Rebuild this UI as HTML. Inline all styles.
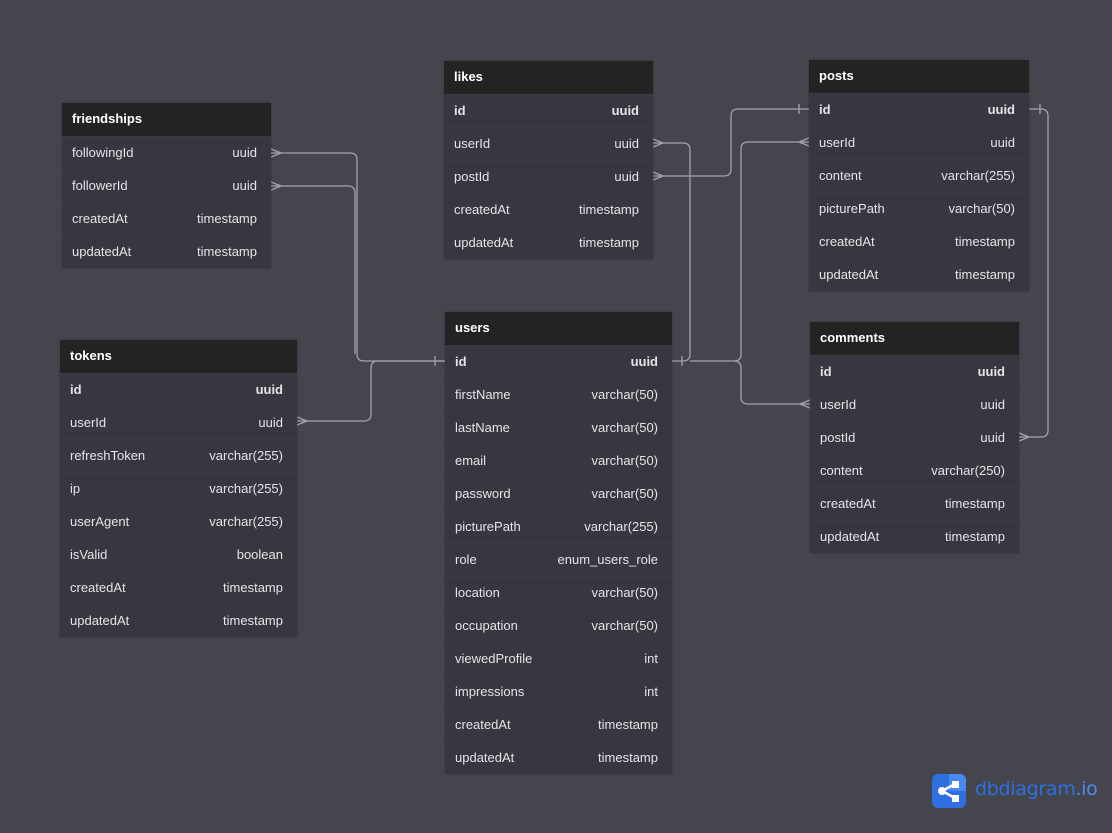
<!DOCTYPE html>
<html><head><style>
body{margin:0;width:1112px;height:833px;background:#45454e;font-family:"Liberation Sans",sans-serif;overflow:hidden;position:relative}
.t{position:absolute;background:#37373f;box-shadow:0 0 2px rgba(0,0,0,.3)}
.h{height:33px;background:#232323;color:#fff;font-weight:bold;font-size:13px;line-height:31px;padding-left:10px}
.r{height:33px;line-height:31px;font-size:13px;color:#e4e4e8;padding:0 14px 0 10px;display:flex;justify-content:space-between;border-top:1px solid #3c3c44;box-sizing:border-box}
.r.b{font-weight:bold}
svg{position:absolute;left:0;top:0}
</style></head><body>
<svg width="1112" height="833" fill="none" stroke="#a3a3ad" stroke-width="1.3">
<path d="M271 153H350q7 0 7 7V354q0 7 7 7H445"/>
<path d="M271 186H348q7 0 7 7V354"/>
<path d="M297 421H364q7 0 7-7V368q0-7 7-7H445"/>
<path d="M653 143H683q7 0 7 7V354q0 7-7 7H672"/>
<path d="M653 176H724q7 0 7-7V116q0-7 7-7H809"/>
<path d="M809 142H748q-7 0-7 7V354q0 7-7 7H690"/>
<path d="M810 404H748q-7 0-7-7V368q0-7-7-7"/>
<path d="M1019 437H1041q7 0 7-7V116q0-7-7-7H1029"/>
<path d="M435 356v10M682 356v10M799 104v10M1040 104v10"/>
<path d="M271 149l10 4-10 4M271 182l10 4-10 4M297 417l10 4-10 4M653 139l10 4-10 4M653 172l10 4-10 4M809 138l-10 4 10 4M810 400l-10 4 10 4M1019 433l10 4-10 4"/>
</svg>

<div class="t" style="left:62px;top:103px;width:209px"><div class="h">friendships</div>
<div class="r"><span>followingId</span><span>uuid</span></div><div class="r"><span>followerId</span><span>uuid</span></div><div class="r"><span>createdAt</span><span>timestamp</span></div><div class="r"><span>updatedAt</span><span>timestamp</span></div></div>

<div class="t" style="left:444px;top:61px;width:209px"><div class="h">likes</div>
<div class="r b"><span>id</span><span>uuid</span></div><div class="r"><span>userId</span><span>uuid</span></div><div class="r"><span>postId</span><span>uuid</span></div><div class="r"><span>createdAt</span><span>timestamp</span></div><div class="r"><span>updatedAt</span><span>timestamp</span></div></div>

<div class="t" style="left:809px;top:60px;width:220px"><div class="h">posts</div>
<div class="r b"><span>id</span><span>uuid</span></div><div class="r"><span>userId</span><span>uuid</span></div><div class="r"><span>content</span><span>varchar(255)</span></div><div class="r"><span>picturePath</span><span>varchar(50)</span></div><div class="r"><span>createdAt</span><span>timestamp</span></div><div class="r"><span>updatedAt</span><span>timestamp</span></div></div>

<div class="t" style="left:60px;top:340px;width:237px"><div class="h">tokens</div>
<div class="r b"><span>id</span><span>uuid</span></div><div class="r"><span>userId</span><span>uuid</span></div><div class="r"><span>refreshToken</span><span>varchar(255)</span></div><div class="r"><span>ip</span><span>varchar(255)</span></div><div class="r"><span>userAgent</span><span>varchar(255)</span></div><div class="r"><span>isValid</span><span>boolean</span></div><div class="r"><span>createdAt</span><span>timestamp</span></div><div class="r"><span>updatedAt</span><span>timestamp</span></div></div>

<div class="t" style="left:445px;top:312px;width:227px"><div class="h">users</div>
<div class="r b"><span>id</span><span>uuid</span></div><div class="r"><span>firstName</span><span>varchar(50)</span></div><div class="r"><span>lastName</span><span>varchar(50)</span></div><div class="r"><span>email</span><span>varchar(50)</span></div><div class="r"><span>password</span><span>varchar(50)</span></div><div class="r"><span>picturePath</span><span>varchar(255)</span></div><div class="r"><span>role</span><span>enum_users_role</span></div><div class="r"><span>location</span><span>varchar(50)</span></div><div class="r"><span>occupation</span><span>varchar(50)</span></div><div class="r"><span>viewedProfile</span><span>int</span></div><div class="r"><span>impressions</span><span>int</span></div><div class="r"><span>createdAt</span><span>timestamp</span></div><div class="r"><span>updatedAt</span><span>timestamp</span></div></div>

<div class="t" style="left:810px;top:322px;width:209px"><div class="h">comments</div>
<div class="r b"><span>id</span><span>uuid</span></div><div class="r"><span>userId</span><span>uuid</span></div><div class="r"><span>postId</span><span>uuid</span></div><div class="r"><span>content</span><span>varchar(250)</span></div><div class="r"><span>createdAt</span><span>timestamp</span></div><div class="r"><span>updatedAt</span><span>timestamp</span></div></div>

<svg style="left:932px;top:774px" width="34" height="34" viewBox="0 0 34 34" stroke="none">
<rect width="34" height="34" rx="6" fill="#2f6fe0"/>
<path d="M17 0h11a6 6 0 0 1 6 6v11H17z" fill="#4a87ee"/>
<g stroke="#fff" stroke-width="2.5"><path d="M10 17L23 10M10 17L23 24"/></g>
<circle cx="10" cy="17" r="4" fill="#fff"/><rect x="20" y="7" width="7" height="7" fill="#fff"/><rect x="20" y="21" width="7" height="7" fill="#fff"/>
</svg>
<div style="position:absolute;left:975px;top:778px;font-size:19px;color:#2e6fe0;font-family:'DejaVu Sans',sans-serif;letter-spacing:-0.3px">dbdiagram<span style="color:#4a8ef0">.io</span></div>
</body></html>
